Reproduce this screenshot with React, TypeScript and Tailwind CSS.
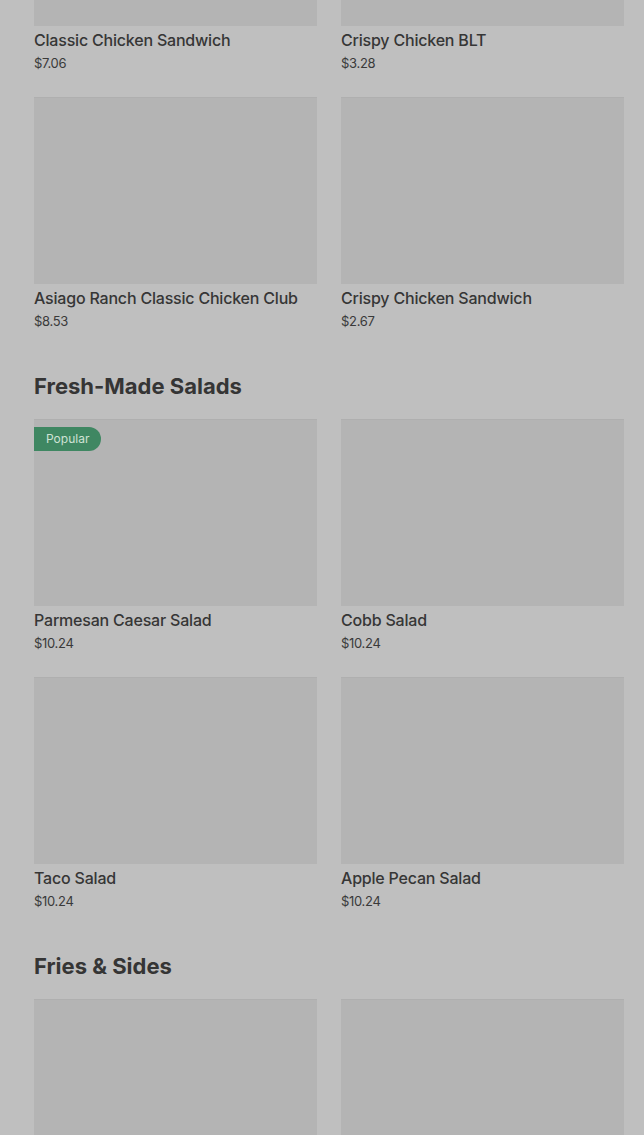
interface MenuItem {
  name: string;
  price: string;
  popular?: boolean;
}

interface Section {
  title?: string;
  items: MenuItem[];
}

const sections: Section[] = [
  {
    items: [
      { name: 'Classic Chicken Sandwich', price: '$7.06' },
      { name: 'Crispy Chicken BLT', price: '$3.28' },
      { name: 'Asiago Ranch Classic Chicken Club', price: '$8.53' },
      { name: 'Crispy Chicken Sandwich', price: '$2.67' },
    ],
  },
  {
    title: 'Fresh-Made Salads',
    items: [
      { name: 'Parmesan Caesar Salad', price: '$10.24', popular: true },
      { name: 'Cobb Salad', price: '$10.24' },
      { name: 'Taco Salad', price: '$10.24' },
      { name: 'Apple Pecan Salad', price: '$10.24' },
    ],
  },
  {
    title: 'Fries & Sides',
    // below the fold, only the images show
    items: [
      { name: '', price: '' },
      { name: '', price: '' },
    ],
  },
];

function ItemCard({ item }: { item: MenuItem }) {
  return (
    <div className="flex flex-col">
      <div className="relative h-[187px] bg-[#b4b4b4] border-t border-[#afafaf]">
        {item.popular && (
          <span className="absolute left-0 top-[7px] h-[24px] px-[12px] flex items-center rounded-r-full bg-[#3f8762] text-[#cfe2d5] text-[12px]">
            Popular
          </span>
        )}
      </div>
      {item.name && (
        <>
          <div className="mt-[4px] text-[16px] leading-[20px] font-medium text-[#363636] tracking-[-0.2px]">
            {item.name}
          </div>
          <div className="mt-[3px] text-[13px] leading-[20px] text-[#3a3a3a] tracking-[-0.3px]">{item.price}</div>
        </>
      )}
    </div>
  );
}

export default function App() {
  return (
    <div
      className="h-[1135px] bg-[#bfbfbf] overflow-hidden"
      style={{ fontFamily: 'Inter, "Noto Sans", sans-serif' }}
    >
      <div className="pl-[34px] pr-[20px] -mt-[161px]">
        {sections.map((section, i) => (
          <div key={i} className={section.title ? 'mt-[41px]' : ''}>
            {section.title && (
              <h2 className="mb-[19px] text-[22px] leading-[28px] font-bold text-[#353535]">
                {section.title}
              </h2>
            )}
            <div className="grid grid-cols-2 gap-[24px]">
              {section.items.map((item, j) => (
                <ItemCard key={j} item={item} />
              ))}
            </div>
          </div>
        ))}
      </div>
    </div>
  );
}
